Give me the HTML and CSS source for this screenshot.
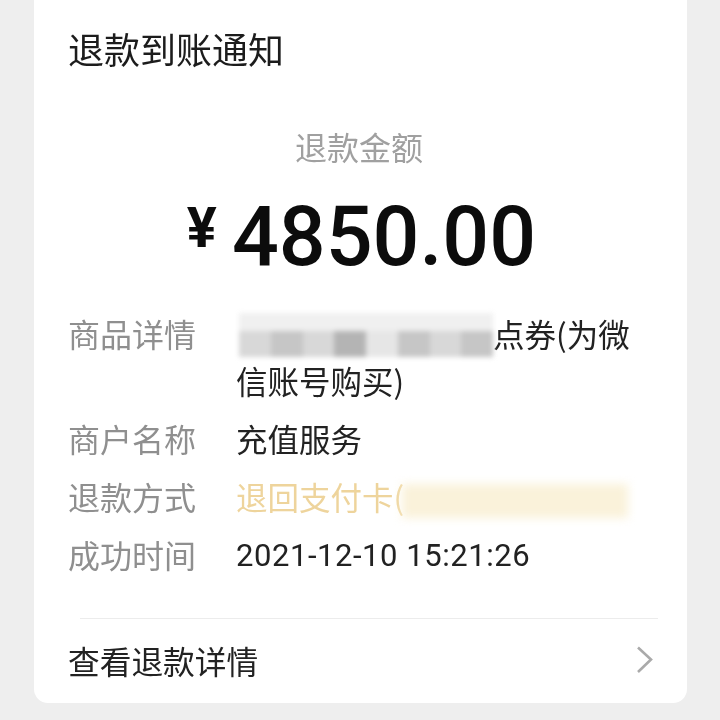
FILE: index.html
```html
<!DOCTYPE html>
<html lang="zh-CN">
<head>
    <meta charset="UTF-8">
    <title>退款到账通知</title>
    <link rel="stylesheet" href="styles.css">
</head>
<body>

<div class="card">
  <div class="title">退款到账通知</div>
  <div class="amount-label">退款金额</div>
  <div class="amount"><span class="currency">¥</span><span class="number">4850.00</span></div>

  <div class="rows">
    <div class="row">
      <div class="label">商品详情</div>
      <div class="value"><span class="mosaic"><i></i><i class="dark"></i><i></i><i class="darker"></i><i class="light"></i><i class="dark"></i><i></i><i class="dark"></i></span>点券(为微信账号购买)</div>
    </div>
    <div class="row">
      <div class="label">商户名称</div>
      <div class="value">充值服务</div>
    </div>
    <div class="row">
      <div class="label">退款方式</div>
      <div class="value yellow">退回支付卡(<span class="smear"></span></div>
    </div>
    <div class="row">
      <div class="label">成功时间</div>
      <div class="value">2021-12-10 15:21:26</div>
    </div>
  </div>

  <div class="divider"></div>
  <div class="footer">
    <span>查看退款详情</span>
    <svg class="chevron" width="18" height="28" viewBox="0 0 18 28"><path d="M2 1.5 L15 13.5 L2 26" fill="none" stroke="#aaa" stroke-width="2.6"/></svg>
  </div>
</div>

</body>
</html>
```

FILE: styles.css
```css
html, body {
	margin: 0;
	height: 720px;
	overflow: hidden;
}
body {
	background: #eeeeee;
	font-family: "Noto Sans CJK SC", "Liberation Sans", sans-serif;
	padding: 0 33px 17px 34px;
	box-sizing: border-box;
}
.card {
	height: 703px;
	background: #fff;
	border-radius: 0 0 14px 14px;
	padding: 0 34px;
	box-sizing: border-box;
	filter: blur(0.4px);
}
.title {
	padding-top: 23px;
	font-size: 36px;
	line-height: 50px;
	color: #1c1c1c;
}
.amount-label {
	margin-top: 50px;
	margin-left: -3px;
	text-align: center;
	font-size: 32px;
	line-height: 46px;
	color: #a0a0a0;
}
.amount {
	margin-top: 20px;
	display: flex;
	justify-content: center;
	align-items: flex-start;
	gap: 15px;
	color: #0c0c0c;
	font-family: Roboto, "Liberation Sans", sans-serif;
	font-weight: 500;
}
.currency {
	font-size: 56px;
	line-height: 72px;
	font-weight: 700;
	margin: 3px 0 0 2px;
}
.number {
	font-size: 82.5px;
	line-height: 96px;
}
.rows {
	margin-top: 25px;
	display: flex;
	flex-direction: column;
	gap: 12px;
}
.row {
	display: flex;
	font-size: 32px;
	line-height: 46px;
}
.label {
	width: 169px;
	flex: none;
	color: #8f8f8f;
}
.value {
	color: #222;
	font-size: 31.5px;
	margin-left: -1px;
}
.row:last-child .value {
	font-family: Roboto, sans-serif;
	font-size: 31px;
	letter-spacing: 0.55px;
	padding-top: 2px;
}
.yellow {
	color: #eed49c;
	white-space: nowrap;
}
.mosaic {
	display: inline-flex;
	width: 254px;
	height: 44px;
	margin-left: 3px;
	vertical-align: -10px;
	filter: blur(2.5px);
	background: linear-gradient(#f0f0f0 0 40%, transparent 40%);
}
.mosaic i {
	flex: 1;
	margin-top: 18px;
	background: #d8d8d8;
}
.mosaic .dark {
	background: #c6c6c6;
}
.mosaic .darker {
	background: #b4b4b4;
}
.mosaic .light {
	background: #e6e6e6;
}
.smear {
	display: inline-block;
	width: 226px;
	height: 34px;
	vertical-align: -8px;
	margin-left: -2px;
	background: #faf2da;
	filter: blur(5px);
}
.divider {
	margin: 39px -5px 0 12px;
	height: 1px;
	background: #ececec;
}
.footer {
	margin-top: 18px;
	display: flex;
	justify-content: space-between;
	align-items: center;
	font-size: 31.7px;
	line-height: 46px;
	color: #222;
}
.chevron {
	margin-right: -1px;
}
```
